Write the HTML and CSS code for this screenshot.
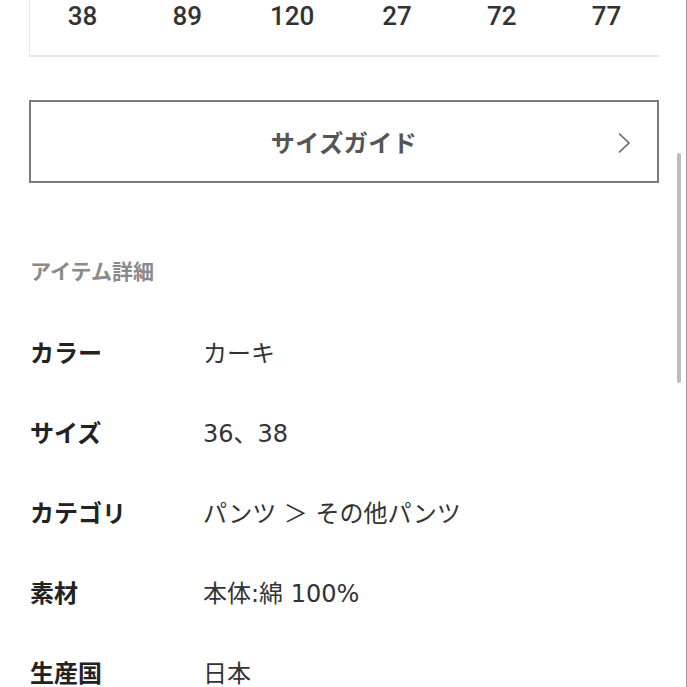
FILE: index.html
```html
<!DOCTYPE html>
<html>
<head>
    <title>アイテム詳細</title>
    <link rel="stylesheet" href="styles.css">
</head>
<body>
    <div class="page">
        <div class="size-table">
            <div class="size-row">
                <span>38</span>
                <span>89</span>
                <span>120</span>
                <span>27</span>
                <span>72</span>
                <span>77</span>
            </div>
        </div>

        <a class="guide-button" href="#">
            <span class="guide-label">サイズガイド</span>
            <svg class="chevron" width="14" height="22" viewBox="0 0 14 22">
                <path d="M2 1.5 L12 11 L2 20.5" fill="none" stroke="#666" stroke-width="1.6"/>
            </svg>
        </a>

        <h2 class="section-title">アイテム詳細</h2>

        <div class="detail-list">
            <div class="detail-row">
                <div class="detail-label">カラー</div>
                <div class="detail-value">カーキ</div>
            </div>
            <div class="detail-row">
                <div class="detail-label">サイズ</div>
                <div class="detail-value">36、38</div>
            </div>
            <div class="detail-row">
                <div class="detail-label">カテゴリ</div>
                <div class="detail-value">パンツ ＞ その他パンツ</div>
            </div>
            <div class="detail-row">
                <div class="detail-label">素材</div>
                <div class="detail-value">本体:綿 100%</div>
            </div>
            <div class="detail-row">
                <div class="detail-label">生産国</div>
                <div class="detail-value">日本</div>
            </div>
        </div>
    </div>

    <div class="scroll-thumb"></div>
    <div class="edge-line"></div>
</body>
</html>
```

FILE: styles.css
```css
body {
    margin: 0;
    padding: 0;
    background-color: #fff;
    color: #222;
    font-family: "Noto Sans CJK JP", sans-serif;
    overflow: hidden;
}

.page {
    width: 630px;
    padding-left: 29px;
}

.size-table {
    border-left: 1px solid #e8e8e8;
    border-bottom: 2px solid #e6e6e6;
    height: 55px;
}

.size-row {
    display: grid;
    grid-template-columns: repeat(6, 1fr);
    font-family: Roboto, "Liberation Sans", sans-serif;
    font-size: 26px;
    font-weight: 500;
    line-height: 33px;
    color: #333;
    text-align: center;
}

.guide-button {
    display: flex;
    align-items: center;
    justify-content: center;
    position: relative;
    margin-top: 43px;
    height: 79px;
    border: 2px solid #7a7a7a;
    text-decoration: none;
}

.guide-label {
    font-size: 24px;
    font-weight: bold;
    color: #555;
    letter-spacing: 0.5px;
}

.chevron {
    position: absolute;
    right: 26px;
    top: 30px;
}

.section-title {
    margin: 72px 0 0 1px;
    font-size: 21px;
    line-height: 30px;
    font-weight: bold;
    color: #8a8a8a;
}

.detail-list {
    margin-top: 26px;
}

.detail-row {
    display: flex;
    align-items: center;
    height: 80px;
    font-size: 24px;
}

.detail-label {
    width: 173px;
    padding-left: 1px;
    font-weight: bold;
    color: #222;
}

.detail-value {
    font-family: "DejaVu Sans", "Noto Sans CJK JP", sans-serif;
    color: #333;
}

.scroll-thumb {
    position: absolute;
    left: 677px;
    top: 153px;
    width: 4px;
    height: 230px;
    border-radius: 2px;
    background-color: #bdbdbd;
}

.edge-line {
    position: absolute;
    left: 686px;
    top: 0;
    width: 1px;
    height: 687px;
    background-color: #9a9a9a;
}
```
